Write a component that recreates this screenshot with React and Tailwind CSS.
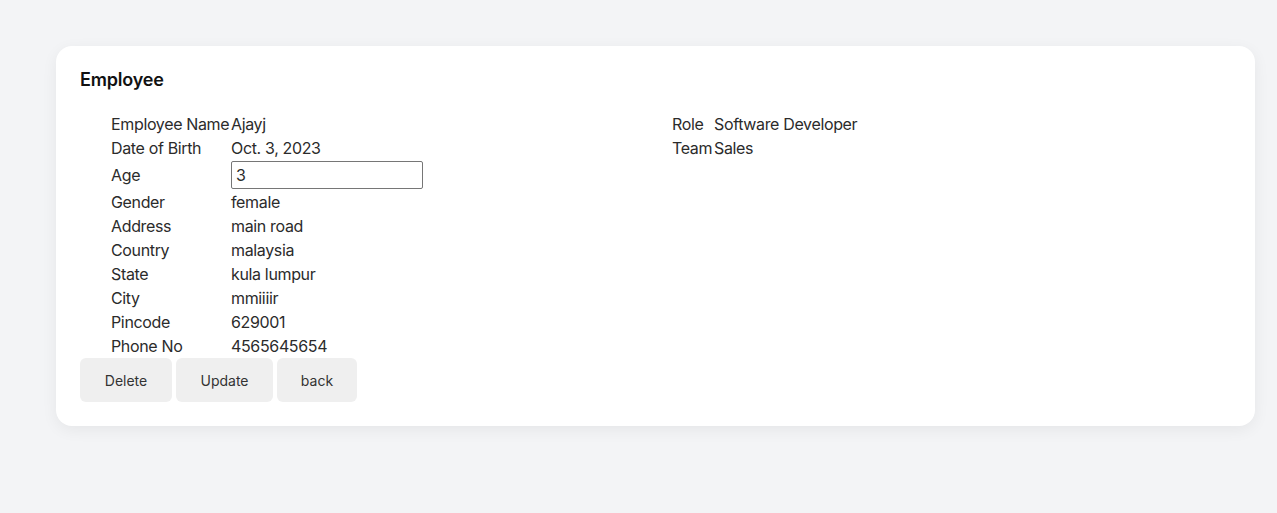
import React from "react";

const left = [
  ["Employee Name", "Ajayj"],
  ["Date of Birth", "Oct. 3, 2023"],
  ["Age", null],
  ["Gender", "female"],
  ["Address", "main road"],
  ["Country", "malaysia"],
  ["State", "kula lumpur"],
  ["City", "mmiiiir"],
  ["Pincode", "629001"],
  ["Phone No", "4565645654"],
];

const right = [
  ["Role", "Software Developer"],
  ["Team", "Sales"],
];

export default function App() {
  return (
    <div
      className="min-h-[513px] w-full bg-[#f3f4f6] pt-[46px] pl-[56px] text-[#2b2b2b]"
      style={{ fontFamily: "Inter, 'Liberation Sans', sans-serif" }}
    >
      <div className="w-[1199px] rounded-[16px] bg-white pt-[20px] pb-[24px] px-[24px] shadow-[0_4px_16px_rgba(0,0,0,0.06)]">
        <h2 className="h-[28px] text-[18px] leading-[28px] font-semibold text-[#111] tracking-[-0.2px]">
          Employee
        </h2>
        <div className="mt-[18px] flex">
          <div className="w-[592px] pl-[31px]">
            {left.map(([k, v]) => (
              <div
                key={k}
                className={`flex items-center text-[16px] tracking-[-0.35px] ${
                  v === null ? "h-[30px]" : "h-[24px]"
                }`}
              >
                <div className="w-[120px] shrink-0">{k}</div>
                {v === null ? (
                  <input
                    defaultValue="3"
                    className="h-[28px] w-[192px] rounded-[2px] border border-[#767676] px-[4px] text-[16px] text-[#2b2b2b] outline-none"
                  />
                ) : (
                  <div>{v}</div>
                )}
              </div>
            ))}
          </div>
          <div>
            {right.map(([k, v]) => (
              <div key={k} className="flex h-[24px] items-center text-[16px] tracking-[-0.35px]">
                <div className="w-[42px] shrink-0">{k}</div>
                <div>{v}</div>
              </div>
            ))}
          </div>
        </div>
        <div className="flex gap-[4px]">
          <button className="h-[44px] w-[92px] rounded-[6px] bg-[#efefef] text-[14px] text-[#333]">
            Delete
          </button>
          <button className="h-[44px] w-[97px] rounded-[6px] bg-[#efefef] text-[14px] text-[#333]">
            Update
          </button>
          <button className="h-[44px] w-[80px] rounded-[6px] bg-[#efefef] text-[14px] text-[#333]">
            back
          </button>
        </div>
      </div>
    </div>
  );
}
